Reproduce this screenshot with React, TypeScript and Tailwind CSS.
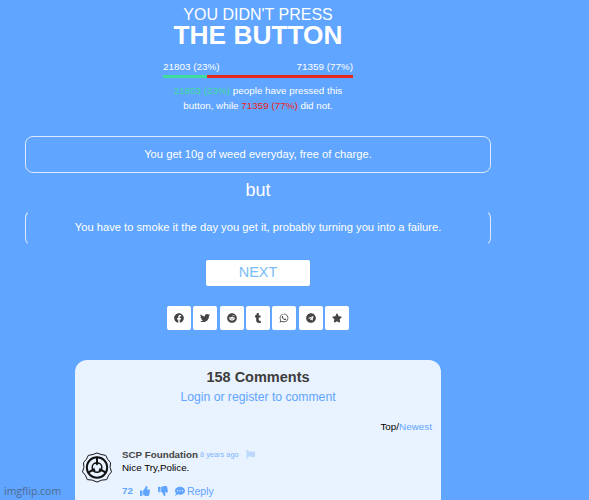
import React from "react";
import {
	FaCommentDots,
	FaFacebook,
	FaFlag,
	FaReddit,
	FaStar,
	FaTelegram,
	FaThumbsDown,
	FaThumbsUp,
	FaTumblr,
	FaTwitter,
	FaWhatsapp,
} from "react-icons/fa";

const shareIcons = [FaFacebook, FaTwitter, FaReddit, FaTumblr, FaWhatsapp, FaTelegram, FaStar];

const ScpLogo: React.FC = () => (
	<svg width="32" height="31" viewBox="0 0 32 32" fill="none" stroke="#111" className="shrink-0">
		<path
			d="M12 2.5 L16 1 L20 2.5 L25 3.5 L27 7.5 L30 11 L29.5 16 L31 20.5 L28 24 L26 28.5 L21 29 L16 31 L11 29 L6 28.5 L4 24 L1 20.5 L2.5 16 L2 11 L5 7.5 L7 3.5 Z"
			strokeWidth="1"
		/>
		<circle cx="16" cy="16" r="10.5" strokeWidth="2" />
		<circle cx="16" cy="16" r="5" strokeWidth="1.5" />
		<path d="M16 5 V12 M25.5 21.5 L19.5 18 M6.5 21.5 L12.5 18" strokeWidth="2" />
		<path d="M13.5 11 H18.5 L16 14 Z M21.5 20 L19 16 L17.5 19.5 Z M10.5 20 L13 16 L14.5 19.5 Z" fill="#111" stroke="none" />
	</svg>
);

export default function App() {
	return (
		<div className="relative h-[500px] w-[589px] overflow-hidden bg-[#60a5ff] font-['Liberation_Sans',sans-serif] text-white">
			<div className="flex w-[516px] flex-col items-center">
				<h2 className="mt-[5px] text-[16px] leading-[19px] font-normal">YOU DIDN'T PRESS</h2>
				<h1 className="text-[26.3px] leading-[22px] font-bold">THE BUTTON</h1>
				<div className="mt-[15px] flex w-[190px] justify-between text-[9.9px] leading-[12px]">
					<span>21803 (23%)</span>
					<span>71359 (77%)</span>
				</div>
				<div className="mt-[2px] flex h-[3px] w-[190px]">
					<div className="w-[44px] bg-[#3fdc9b]" />
					<div className="flex-1 bg-[#e8281e]" />
				</div>
				<div className="mt-[5px] w-[190px] text-center text-[9.85px] leading-[15px]">
					<p>
						<span className="text-[#3fdc9b]">21803 (23%)</span> people have pressed this
					</p>
					<p>
						button, while <span className="text-[#f01e14]">71359 (77%)</span> did not.
					</p>
				</div>
				<div className="mt-[23px] flex h-[37px] w-[466px] items-center justify-center rounded-[8px] border border-[#dbeaff] pb-[1px] text-[11.2px]">
					You get 10g of weed everyday, free of charge.
				</div>
				<div className="mt-[2px] text-[18px] leading-[30px]">but</div>
				<div className="mt-[5px] flex h-[36px] w-[466px] items-center justify-center rounded-[8px] border border-x-[#dbeaff] border-y-transparent pb-[1px] text-[11.2px]">
					You have to smoke it the day you get it, probably turning you into a failure.
				</div>
				<button className="mt-[14px] h-[26px] w-[104px] rounded-[2px] bg-white text-[14.5px] text-[#79bdfa]">NEXT</button>
				<div className="mt-[20px] flex gap-[2.33px]">
					{shareIcons.map((Icon, i) => (
						<div key={i} className="flex h-[24px] w-[24px] items-center justify-center rounded-[2px] bg-white text-[#444]">
							<Icon size={10} />
						</div>
					))}
				</div>
				<section className="mt-[30px] h-[140px] w-[366px] rounded-t-[12px] bg-[#e9f2ff] px-[6px]">
					<h3 className="pt-[9px] text-center text-[14.5px] leading-[16px] font-bold text-[#3d3d3d]">158 Comments</h3>
					<p className="mt-[5px] text-center text-[12.2px] leading-[14px] text-[#60a5ff]">Login or register to comment</p>
					<div className="mt-[17px] pr-[3px] text-right text-[9.9px] leading-[12px] text-black">
						Top/<span className="text-[#60a5ff]">Newest</span>
					</div>
					<div className="mt-[16px] flex gap-[9px]">
						<div className="pt-[3px]">
							<ScpLogo />
						</div>
						<div className="min-w-0">
							<div className="flex items-center gap-[2px] leading-[12px]">
								<span className="text-[9.8px] font-bold text-[#444]">SCP Foundation</span>
								<span className="text-[7.4px] text-[#7db6fb]">8 years ago</span>
								<FaFlag size={9} className="ml-[5px] -translate-y-[1px] text-[#bcd8fc]" />
							</div>
							<p className="mt-[1px] text-[9.8px] leading-[12px] text-black">Nice Try,Police.</p>
							<div className="mt-[11px] flex items-center text-[#60a5ff]">
								<span className="text-[9.8px] leading-[12px] font-bold">72</span>
								<FaThumbsUp size={10} className="ml-[7px]" />
								<FaThumbsDown size={10} className="ml-[8px]" />
								<FaCommentDots size={10} className="ml-[7px]" />
								<span className="ml-[2px] text-[10.5px] leading-[12px]">Reply</span>
							</div>
						</div>
					</div>
				</section>
			</div>
			<div className="absolute bottom-[2px] left-[4px] font-['Open_Sans',sans-serif] text-[10.5px] leading-[14px] text-[#4f6a94]">imgflip.com</div>
		</div>
	);
}
